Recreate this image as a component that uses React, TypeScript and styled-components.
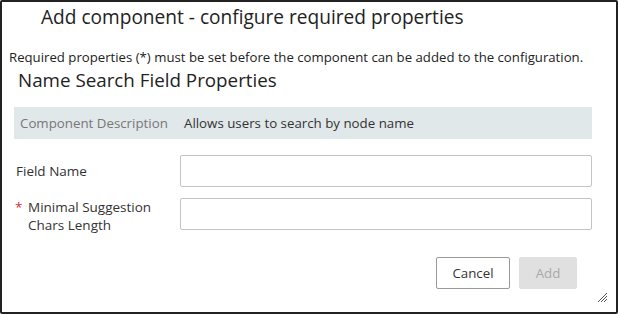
import React from "react";
import styled, { createGlobalStyle } from "styled-components";

const Global = createGlobalStyle`
  html, body { margin: 0; padding: 0; background: #fff; }
  body { font-family: "Open Sans", "Noto Sans", sans-serif; color: #333; }
  * { box-sizing: border-box; }
`;

const Dialog = styled.div`
  position: relative;
  width: 618px;
  height: 314px;
  border: 2px solid #222;
  border-radius: 2px;
  background: #fff;
  display: flex;
  flex-direction: column;
`;

const Title = styled.h1`
  margin: 0;
  padding: 2px 0 0 39px;
  height: 32px;
  font-size: 19.1px;
  font-weight: 400;
  line-height: 26px;
  color: #222;
`;

const Notice = styled.p`
  margin: 15px 0 0 7px;
  font-size: 13.2px;
  line-height: 17px;
  color: #222;
`;

const Subtitle = styled.h2`
  margin: 2px 0 0 16px;
  font-size: 18.8px;
  font-weight: 400;
  line-height: 24px;
  color: #222;
`;

const Content = styled.div`
  padding: 15px 24px 0 12px;
  display: flex;
  flex-direction: column;
`;

const DescBand = styled.div`
  height: 32px;
  background: #e1e8ea;
  display: flex;
  align-items: center;
  font-size: 13.3px;
`;

const DescLabel = styled.span`
  width: 170px;
  padding-left: 6px;
  color: #777;
`;

const DescValue = styled.span`
  color: #333;
`;

const Form = styled.div`
  display: grid;
  grid-template-columns: 166px 1fr;
  row-gap: 11px;
  margin-top: 16px;
`;

const Label = styled.div<{ $required?: boolean }>`
  display: flex;
  align-items: center;
  font-size: 13.5px;
  line-height: 18px;
  color: #333;
  padding-left: ${(p) => (p.$required ? "0" : "2px")};
`;

const Star = styled.span`
  color: #d03030;
  width: 14px;
  align-self: flex-start;
  padding-left: 1px;
`;

const Input = styled.input`
  height: 32px;
  width: 100%;
  align-self: start;
  border: 1px solid #c4c4c4;
  border-radius: 2px;
  font: inherit;
  padding: 0 8px;
  outline: none;
`;

const Footer = styled.div`
  display: flex;
  justify-content: flex-end;
  gap: 9px;
  padding: 23px 39px 0 0;
`;

const Button = styled.button<{ $disabled?: boolean }>`
  height: 32px;
  min-width: ${(p) => (p.$disabled ? "58px" : "74px")};
  padding: 0 12px;
  font-family: inherit;
  font-size: 13.3px;
  border-radius: 2px;
  border: 1px solid ${(p) => (p.$disabled ? "#e0e0e0" : "#9a9a9a")};
  background: ${(p) => (p.$disabled ? "#e0e0e0" : "#fff")};
  color: ${(p) => (p.$disabled ? "#aaa" : "#333")};
`;

const Grip = styled.svg`
  position: absolute;
  right: 8px;
  bottom: 9px;
`;

export default function App() {
  return (
    <>
      <Global />
      <Dialog>
        <Title>Add component - configure required properties</Title>
        <Notice>
          Required properties (*) must be set before the component can be added to the configuration.
        </Notice>
        <Subtitle>Name Search Field Properties</Subtitle>
        <Content>
          <DescBand>
            <DescLabel>Component Description</DescLabel>
            <DescValue>Allows users to search by node name</DescValue>
          </DescBand>
          <Form>
            <Label>Field Name</Label>
            <Input />
            <Label $required>
              <Star>*</Star>
              <span>
                Minimal Suggestion
                <br />
                Chars Length
              </span>
            </Label>
            <Input />
          </Form>
        </Content>
        <Footer>
          <Button>Cancel</Button>
          <Button $disabled disabled>
            Add
          </Button>
        </Footer>
        <Grip width="11" height="11" viewBox="0 0 11 11">
          <path d="M1 10 L10 1 M4 10 L10 4 M7 10 L10 7" stroke="#555" strokeWidth="1" />
        </Grip>
      </Dialog>
    </>
  );
}
